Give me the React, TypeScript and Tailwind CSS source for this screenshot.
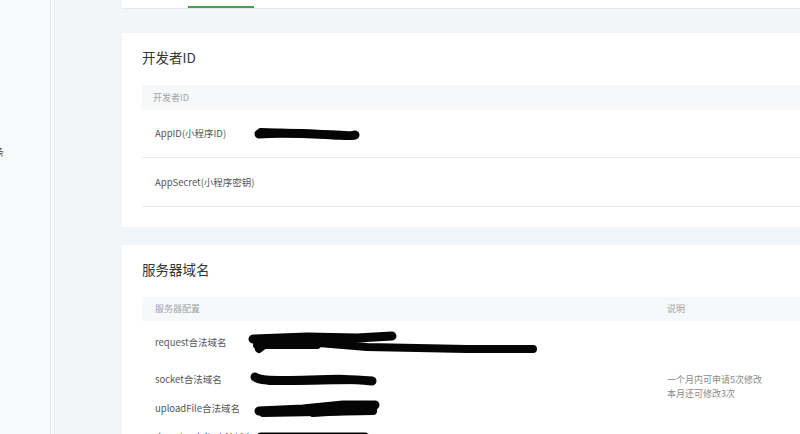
import React from 'react';

const font = "font-['Noto_Sans_CJK_SC','Noto_Sans',sans-serif]";

function Scribble({ w, h, d }: { w: number; h: number; d: string[] }) {
  return (
    <svg width={w} height={h} viewBox={`0 0 ${w} ${h}`} className="shrink-0">
      {d.map((p, i) => (
        <path key={i} d={p} fill="none" stroke="#050505" strokeLinecap="round" strokeLinejoin="round" strokeWidth={i === 0 ? 9 : 8} />
      ))}
    </svg>
  );
}

function DevIdCard() {
  return (
    <div className="w-[720px] bg-white pt-[15px] pb-[20px]">
      <div className="px-[20px] text-[13.5px] leading-[18px] text-[#353535]">开发者ID</div>
      <div className="mx-[20px] mt-[19px]">
        <div className="flex h-[25px] items-center bg-[#f6f8fa] pl-[11px] text-[9px] text-[#a3a3a3]">开发者ID</div>
        <div className="flex h-[48px] items-center border-b border-[#e7e9ec] pl-[13px] text-[9.5px] text-[#555]">
          <span className="w-[98px]">AppID(小程序ID)</span>
          <Scribble w={108} h={16} d={['M6 8 C 30 6, 60 8, 80 9 S 96 10, 102 9', 'M8 6 L 90 9']} />
        </div>
        <div className="flex h-[49px] items-center border-b border-[#e7e9ec] pl-[13px] text-[9.5px] text-[#555]">
          AppSecret(小程序密钥)
        </div>
      </div>
    </div>
  );
}

function DomainCard() {
  return (
    <div className="mt-[18px] w-[720px] bg-white pt-[15px]">
      <div className="px-[20px] text-[13.5px] leading-[18px] text-[#353535]">服务器域名</div>
      <div className="mx-[20px] mt-[19px]">
        <div className="flex h-[24px] items-center bg-[#f6f8fa] text-[9px] text-[#a3a3a3]">
          <div className="w-[525px] pl-[13px]">服务器配置</div>
          <div>说明</div>
        </div>
        <div className="flex">
          <div className="w-[525px] pl-[13px] text-[9.5px] text-[#555]">
            <div className="flex h-[42px] items-center">
              <span className="w-[92px]">request合法域名</span>
              <Scribble
                w={292}
                h={34}
                d={['M6 14 L 60 12 L 110 13 L 145 11', 'M12 24 C 20 16, 40 14, 60 17 L 120 22 L 220 24 L 286 24', 'M10 20 L 70 20']}
              />
            </div>
            <div className="flex h-[32px] items-center">
              <span className="w-[95px]">socket合法域名</span>
              <Scribble w={128} h={16} d={['M5 6 C 10 10, 30 10, 60 9 S 100 8, 122 10', 'M20 10 L 110 9']} />
            </div>
            <div className="flex h-[26px] items-center">
              <span className="w-[98px]">uploadFile合法域名</span>
              <Scribble w={128} h={22} d={['M6 14 L 50 12 L 90 8 L 122 8', 'M10 16 L 120 14', 'M60 16 L 120 12']} />
            </div>
            <div className="flex h-[32px] items-center">
              <span className="w-[100px]">downloadFile合法域名</span>
              <Scribble w={118} h={16} d={['M6 8 L 110 8']} />
            </div>
          </div>
          <div className="flex flex-col justify-center text-[9px] leading-[14px] text-[#8a8a8a]">
            <div>一个月内可申请5次修改</div>
            <div>本月还可修改3次</div>
          </div>
        </div>
      </div>
    </div>
  );
}

export default function App() {
  return (
    <div className={`flex h-[434px] w-[800px] overflow-hidden ${font}`}>
      <div className="w-[51px] shrink-0 border-r border-[#e4e8ee] bg-[#f7f9fb] pt-[144px]">
        <div className="-ml-[6px] text-[10px] text-[#444]">条</div>
      </div>
      <div className="w-[4px] shrink-0 border-r border-[#e8ebf0] bg-[#f7f9fb]" />
      <div className="flex-1 overflow-hidden bg-[#f3f6f9] pl-[67px]">
        <div className="h-[9px] w-[720px] border-b border-[#e4e7eb] bg-white pt-[6px]">
          <div className="ml-[66px] h-[2px] w-[66px] bg-[#3fa34d]" />
        </div>
        <div className="pt-[24px]">
          <DevIdCard />
          <DomainCard />
        </div>
      </div>
    </div>
  );
}
